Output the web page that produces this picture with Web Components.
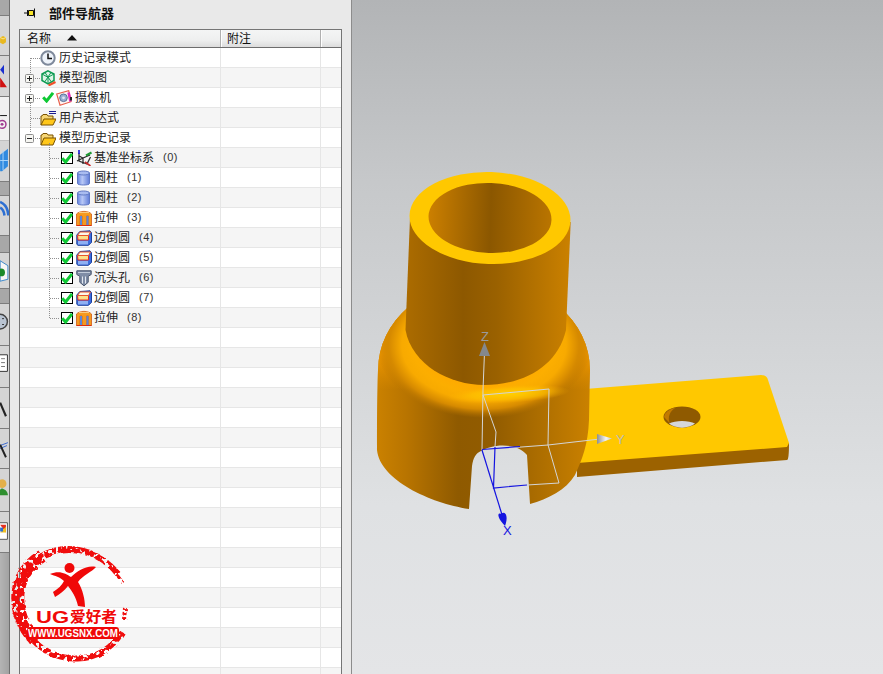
<!doctype html>
<html lang="zh">
<head>
<meta charset="utf-8">
<title>部件导航器</title>
<style>
  html, body { margin: 0; height: 100%; overflow: hidden; background: #e9e9e9; }
</style>
</head>
<body>
<nx-app>
  <nx-toolbar slot="toolbar"></nx-toolbar>
  <nx-part-navigator slot="panel" id="nav">
    <nx-tree-row icon="clock">历史记录模式</nx-tree-row>
    <nx-tree-row icon="view" expander="plus">模型视图</nx-tree-row>
    <nx-tree-row icon="camera" expander="plus" tick>摄像机</nx-tree-row>
    <nx-tree-row icon="exprfolder">用户表达式</nx-tree-row>
    <nx-tree-row icon="folder" expander="minus">模型历史记录</nx-tree-row>
    <nx-tree-row child icon="datum" count="(0)">基准坐标系</nx-tree-row>
    <nx-tree-row child icon="cylinder" count="(1)">圆柱</nx-tree-row>
    <nx-tree-row child icon="cylinder" count="(2)">圆柱</nx-tree-row>
    <nx-tree-row child icon="extrude" count="(3)">拉伸</nx-tree-row>
    <nx-tree-row child icon="blend" count="(4)">边倒圆</nx-tree-row>
    <nx-tree-row child icon="blend" count="(5)">边倒圆</nx-tree-row>
    <nx-tree-row child icon="hole" count="(6)">沉头孔</nx-tree-row>
    <nx-tree-row child icon="blend" count="(7)">边倒圆</nx-tree-row>
    <nx-tree-row child icon="extrude" count="(8)">拉伸</nx-tree-row>
  </nx-part-navigator>
  <nx-viewport slot="view"></nx-viewport>
  <ug-logo slot="overlay"></ug-logo>
</nx-app>

<script>
const ICONS = {
  clock: `<circle cx="8" cy="8" r="6.7" fill="#eef3fa" stroke="#7f8a9c" stroke-width="2"/><path d="M8 3.500v5h4" fill="none" stroke="#111" stroke-width="1.500"/>`,
  view: `<path d="M8 .8l6 3.200v6.500l-6 3.300-6-3.300V4z" fill="#dff5e8" stroke="#0d9a52" stroke-width="1.500"/><path d="M2 4l6 3.300L14 4M8 7.300v6.500M5 2.500l6 9M11 2.500l-6 9" fill="none" stroke="#0d9a52"/><path d="M8.500 15.500l7-3.500" stroke="#f0502a" stroke-width="2.200"/>`,
  camera: `<path d="M.7 4l12-3.300 2.300 11-11 3.500z" fill="#fff3f2" stroke="#e8604c" stroke-width="1.200"/><circle cx="7.500" cy="7.800" r="3.800" fill="#98aed0" stroke="#5a7399"/><circle cx="7.500" cy="7.800" r="1.400" fill="#dfe7f4"/><path d="M12.600 2.500l1.900 9" stroke="#e22cc0" stroke-width="2.600"/><path d="M14 7h2v3.500h-2z" fill="#222"/>`,
  folder: `<path d="M1 15V5h1l1-1.500h4L8 5h5v3" fill="#f6d675" stroke="#7a5200"/><path d="M1 15l3-7h12l-3 7z" fill="#ffc71a" stroke="#7a5200"/>`,
  exprfolder: `<path d="M1 15V6h1l1-1.500h4L8 6h5v3" fill="#f6d675" stroke="#7a5200"/><path d="M1 15l3-6h12l-3 6z" fill="#ffc71a" stroke="#7a5200"/><path d="M9 1.500h7M9 3.500h7" stroke="#1b1b8f"/>`,
  datum: `<path d="M3 3v8l8 3 3.500-7" fill="none" stroke="#333" stroke-width="1.300"/><path d="M3 6l4 2v6M1 11l6-3 7-3" fill="none" stroke="#222" stroke-width="1.200"/><path d="M3 0v4" stroke="#1616d8" stroke-width="1.600"/><path d="M10 5.500l5.500-3" stroke="#1f9a33" stroke-width="2"/><path d="M9 12l5.500 4" stroke="#c82a2a" stroke-width="1.600"/>`,
  cylinder: `<path d="M1.500 3v10.500c0 2 12 2 12 0V3z" fill="url(#cy)" stroke="#5f78c4"/><ellipse cx="7.500" cy="3" rx="6" ry="2" fill="#a9bcf0" stroke="#5f78c4"/><defs><linearGradient id="cy"><stop offset="0" stop-color="#6382e0"/><stop offset=".4" stop-color="#b9c9f6"/><stop offset="1" stop-color="#5f7cd8"/></linearGradient></defs>`,
  extrude: `<path d="M.5 4c3-3.500 12-3.500 15 0v11.500h-3V6h-2v9.500H6V6H4v9.500H.5z" fill="#f59a20" stroke="#d05a10" stroke-width=".8"/><path d="M4 6h2v9H4zM10.500 6h2v9h-2z" fill="#5c86d8"/><path d="M3 2.500h10" stroke="#f8cc80"/><path d="M.5 15.500h15" stroke="#dc2c10"/>`,
  blend: `<path d="M.8 5l3-3.500L14 .8l1.500 2v9.500l-3 3H2l-1.200-1z" fill="#3b6ce0" stroke="#1d3f9a"/><path d="M1.500 5.500h11v4.500H2z" fill="#fbe08a" stroke="#e62c24"/><path d="M4 2h10.500L12.500 5.500H1.500z" fill="#fbf7ea" stroke="#e8562a"/><path d="M2 11h10v3.500H2z" fill="#8fb0f2"/>`,
  hole: `<path d="M.8.800h14.400v3.700l-3 1.800v6l-4.200 3.500-4.200-3.500v-6L.8 4.500z" fill="#7f8da6" stroke="#46536b"/><path d="M6.500 6.500v7M9.500 6.500v7" stroke="#e2e8f0"/><path d="M2 2.500h12" stroke="#c2ccda"/>`
};

class NxApp extends HTMLElement {
  constructor() {
    super();
    this.attachShadow({ mode: "open" });
    this.shadowRoot.innerHTML = /* html */ `
      <style>
        :host { display: flex; position: relative; width: 883px; height: 674px; overflow: hidden; }
        ::slotted(ug-logo) { position: absolute; left: 11px; top: 544px; }
      </style>
      <slot name="toolbar"></slot>
      <slot name="panel"></slot>
      <slot name="view"></slot>
      <slot name="overlay"></slot>
    `;
  }
}

// cut-off strip of the left icon bar: only the first 9px of each button is visible
class NxToolbar extends HTMLElement {
  constructor() {
    super();
    this.attachShadow({ mode: "open" });
  }

  connectedCallback() {
    const parts = [
      [16, "g", ""],
      [40, "", `<path d="M0 22l3-1.500 3 1.500v5l-3 2-3-1.500z" fill="#e8b820"/><path d="M0 22l3 1.500 3-1.500" fill="none" stroke="#fbe68c"/>`],
      [41, "", `<path d="M4 9v10L0 14z" fill="#1a2fd0"/><path d="M0 22l7 10H0z" fill="#d01010"/>`],
      [44, "w", `<path d="M0 19h7" stroke="#111"/><circle cx="2" cy="28" r="4" fill="none" stroke="#a03a90" stroke-width="1.500"/><circle cx="2" cy="28" r="1.500" fill="#a03a90"/>`],
      [41, "", `<path d="M0 14l8-6v18l-6 5H0z" fill="#2f8ae0"/><path d="M0 20h8M3 10v20" stroke="#a8d4fa"/>`],
      [14, "g", ""],
      [40, "", `<path d="M0 6c5 2 8 7 8.500 14M0 12c2 1 4 4 4.500 8" fill="none" stroke="#2d6fd2" stroke-width="2.600"/>`],
      [17, "g", ""],
      [36, "", `<path d="M0 8l8 5v14l-8 2z" fill="#f6f6f6" stroke="#3b86c8"/><circle cx="1" cy="20" r="4" fill="#1a8a2a"/>`],
      [15, "g", ""],
      [42, "", `<circle cx="0" cy="18" r="7.500" fill="#b9c4d2" stroke="#444" stroke-width="1.500"/><path d="M2 15h2M2 21h2" stroke="#333"/>`],
      [42, "", `<path d="M-1 9h8.500v17H-1z" fill="#fff" stroke="#333"/><path d="M1 13h4M1 17h4M1 21h4" stroke="#777"/>`],
      [41, "", `<path d="M0 15l6 14" stroke="#222" stroke-width="2.200"/>`],
      [40, "", `<path d="M0 17l8-3M0 20l7-3" stroke="#3b68d0"/><path d="M0 16l6 13" stroke="#222" stroke-width="2"/>`],
      [43, "", `<circle cx="2" cy="15" r="4.500" fill="#e4b04a"/><path d="M-2 27c0-5 3-7 4-7s6 2 6 7z" fill="#2f8f2f"/>`],
      [41, "", `<path d="M-1 11h8.500v17H-1z" fill="#fff" stroke="#555"/><path d="M0 13h6v8z" fill="#e43020"/><path d="M0 21l6-6v6z" fill="#f0c020"/><path d="M0 16h3v4H0z" fill="#3070d0"/>`]
    ];
    this.shadowRoot.innerHTML = /* html */ `
      <style>
        :host { display: flex; flex-direction: column; flex: none; box-sizing: border-box; width: 10px; height: 674px; border-right: 1px solid #6f6f6f; background: linear-gradient(90deg, #b4b4b4, #a2a2a2); overflow: hidden; }
        .seg { flex: none; box-sizing: border-box; background: #d5d5d5; border-bottom: 1px solid #7d7d7d; overflow: hidden; }
        .g { background: #a8a8a8; }
        .w { background: #f0f0f0; border-bottom-color: #c0c0c0; }
        svg { display: block; width: 9px; height: 100%; }
      </style>
      ${parts.map(([h, cls, art]) => `<div class="seg ${cls}" style="height:${h}px"><svg viewBox="0 0 9 ${h}">${art}</svg></div>`).join("")}
    `;
  }
}

class NxTreeRow extends HTMLElement {
  constructor() {
    super();
    this.attachShadow({ mode: "open" });
  }

  connectedCallback() {
    const icon = this.getAttribute("icon");
    const expander = this.getAttribute("expander");
    const count = this.getAttribute("count");
    const child = this.hasAttribute("child");
    const tick = `<svg class="tick" viewBox="0 0 12 12" width="12" height="12"><path d="M1.200 6.200L4.600 10 11 1.800" fill="none" stroke="#0ec834" stroke-width="3"/></svg>`;

    let lead = "";
    if (child) {
      lead = `<span class="box">${tick}</span>`;
    } else {
      lead = `<span class="exp">${expander ? `<svg viewBox="0 0 9 9" width="9" height="9"><rect x=".5" y=".5" width="8" height="8" rx="1" fill="#f6f6f2" stroke="#8d8d8d"/><path d="M2 4.500h5${expander === "plus" ? "M4.500 2v5" : ""}" stroke="#222"/></svg>` : ""}</span>`;
    }

    this.shadowRoot.innerHTML = /* html */ `
      <style>
        :host { display: grid; grid-template-columns: 200px 1px 99px 1px 20px; height: 20px; box-sizing: border-box; border-bottom: 1px solid #e6e6e6; font: 12px/18px "Noto Sans CJK SC", sans-serif; color: #222; }
        .name { display: flex; align-items: center; min-width: 0; height: 18px; padding-left: ${child ? 41 : 5}px; white-space: nowrap; }
        .line { background: #e6e6e6; }
        .exp { flex: none; width: 9px; height: 9px; margin: 2px 6px 0 0; }
        .exp svg, .ic { display: block; flex: none; }
        .box { flex: none; box-sizing: border-box; width: 12px; height: 12px; margin: 2px 3px 0 0; border: 1px solid #000; background: #fff; }
        .box .tick { display: block; margin: -1px; }
        .topTick { flex: none; margin: 2px 2px 0 2px; }
        .ic { margin-top: 1px; }
        .label { margin: 0 0 1px ${child ? 2 : 3}px; }
        .count { margin-left: 9px; font: 11px "Liberation Sans", sans-serif; letter-spacing: .5px; color: #333; }
      </style>
      <div class="name">
        ${lead}
        ${this.hasAttribute("tick") ? `<span class="topTick">${tick}</span>` : ""}
        ${icon ? `<svg class="ic" viewBox="0 0 16 16" width="16" height="16">${ICONS[icon]}</svg>` : ""}
        ${icon || child ? `<span class="label"><slot></slot></span>` : ""}
        ${count ? `<span class="count">${count}</span>` : ""}
      </div>
      <div class="line"></div><div></div><div class="line"></div><div></div>
    `;
  }
}

class NxPartNavigator extends HTMLElement {
  constructor() {
    super();
    this.attachShadow({ mode: "open" });
  }

  connectedCallback() {
    // dotted tree connectors, coordinates relative to the tree body
    let dots = "M10.500 10v15M10.500 35v10M10.500 55v30M29.500 95v175";
    [10, 70].forEach((y) => (dots += `M11 ${y}.5h9`));
    [30, 50, 90].forEach((y) => (dots += `M15 ${y}.5h5`));
    for (let y = 110; y <= 270; y += 20) dots += `M30 ${y}.5h10`;

    this.shadowRoot.innerHTML = /* html */ `
      <style>
        :host { display: block; flex: none; box-sizing: border-box; width: 342px; height: 674px; padding: 0 9px; background: #e9e9e9; border-right: 1px solid #8c8c8c; overflow: hidden; }
        .title { display: flex; align-items: center; box-sizing: border-box; height: 29px; padding: 0 0 4px 5px; font: bold 13px "Noto Sans CJK SC", sans-serif; color: #111; }
        .title svg { margin-right: 13px; }
        .table { box-sizing: border-box; width: 323px; border: 1px solid #757575; border-bottom: 0; background: #fff; }
        .head { display: grid; grid-template-columns: 200px 2px 98px 2px 19px; height: 17px; border-bottom: 1px solid #6d6d6d; background: linear-gradient(#f4f5f5, #eeefef 60%, #dcdcdc); font: 12px/15px "Noto Sans CJK SC", sans-serif; color: #111; }
        .cell { display: flex; align-items: center; padding: 0 0 2px 7px; }
        .cell svg { margin: 1px 0 0 16px; }
        .sep { background: linear-gradient(90deg, #b0b0b0 50%, #fff 50%); }
        .body { position: relative; height: 628px; overflow: hidden; }
        ::slotted(nx-tree-row:nth-of-type(even)) { background: #f5f5f5; }
        .dots { position: absolute; left: 0; top: 0; pointer-events: none; }
      </style>
      <div class="title">
        <svg viewBox="0 0 12 12" width="12" height="12"><path d="M0 6h3M3.500 3v6" stroke="#111" fill="none"/><path d="M4.500 3.500h5v5h-5z" fill="#f8e428" stroke="#111"/><path d="M10.500 1.500v9" stroke="#111"/></svg>
        <span>部件导航器</span>
      </div>
      <div class="table">
        <div class="head">
          <div class="cell">名称<svg viewBox="0 0 10 6" width="10" height="6"><path d="M5 0l5 5.500H0z" fill="#111"/></svg></div>
          <div class="sep"></div>
          <div class="cell" style="padding-left:5px">附注</div>
          <div class="sep"></div>
          <div></div>
        </div>
        <div class="body">
          <slot></slot>
          <svg class="dots" width="200" height="300"><path d="${dots}" fill="none" stroke="#8f8f8f" stroke-dasharray="1 1"/></svg>
        </div>
      </div>
    `;
  }
}

class NxViewport extends HTMLElement {
  constructor() {
    super();
    this.attachShadow({ mode: "open" });
    const body = "M378 370A106 90 0 0 1 590 370L589 420C588 445 582 460 575 475C566 490 548 499 530 504L527 455C515 441 490 445 481 451C476 453 473 458 472 466L469 509C430 503 380 480 377 450C377 420 377 395 378 370Z";
    this.shadowRoot.innerHTML = /* html */ `
      <style>
        :host { display: block; flex: 1; height: 674px; background: linear-gradient(#b2b4b6, #c6c8ca 27%, #dfe1e3 75%, #e4e5e7); }
        svg { display: block; }
        text { font: 13px "Liberation Sans", sans-serif; }
      </style>
      <svg viewBox="352 0 531 674" width="531" height="674">
        <defs>
          <clipPath id="bodyClip"><path d="${body}"/></clipPath>
          <linearGradient id="wall" gradientUnits="userSpaceOnUse" x1="377" x2="590" y1="0" y2="0">
            <stop offset="0" stop-color="#ca8100"/><stop offset=".14" stop-color="#b87400"/>
            <stop offset=".38" stop-color="#8f5a00"/><stop offset=".55" stop-color="#925c00"/>
            <stop offset="1" stop-color="#ca8100"/>
          </linearGradient>
          <linearGradient id="stem" gradientUnits="userSpaceOnUse" x1="405" x2="571" y1="0" y2="0">
            <stop offset="0" stop-color="#ac6c00"/><stop offset=".35" stop-color="#8d5800"/>
            <stop offset=".55" stop-color="#9a6100"/><stop offset="1" stop-color="#cb8100"/>
          </linearGradient>
          <linearGradient id="bore" gradientUnits="userSpaceOnUse" x1="429" x2="552" y1="0" y2="0">
            <stop offset="0" stop-color="#cb7f00"/><stop offset=".5" stop-color="#8b5700"/>
            <stop offset="1" stop-color="#ba7500"/>
          </linearGradient>
          <linearGradient id="shoulder" gradientUnits="userSpaceOnUse" x1="0" x2="0" y1="300" y2="390">
            <stop offset="0" stop-color="#f59c00"/><stop offset=".6" stop-color="#f09800"/>
            <stop offset="1" stop-color="#e08e00" stop-opacity="0"/>
          </linearGradient>
          <radialGradient id="fillet" gradientUnits="userSpaceOnUse" cx="0" cy="0" r="1" gradientTransform="translate(484 345) scale(108 73)">
            <stop offset=".5" stop-color="#ffa800"/><stop offset=".66" stop-color="#fcae00"/>
            <stop offset=".76" stop-color="#f8aa00"/><stop offset=".88" stop-color="#d68a00"/>
            <stop offset="1" stop-color="#b87400" stop-opacity="0"/>
          </radialGradient>
          <radialGradient id="spec">
            <stop offset="0" stop-color="#ffd000"/><stop offset=".6" stop-color="#ffc400" stop-opacity=".6"/>
            <stop offset="1" stop-color="#ffb000" stop-opacity="0"/>
          </radialGradient>
          <linearGradient id="tip"><stop offset="0" stop-color="#8d8f91"/><stop offset=".6" stop-color="#f5f5f5"/><stop offset="1" stop-color="#c5c7c9"/></linearGradient>
        </defs>

        <!-- plate -->
        <path d="M577 477L787 460Q789 460 789 443L577 460Z" fill="#9c6200"/>
        <path d="M585 389L761 375Q767 375 768 380L789 443 787 447 577 463Z" fill="#ffc800"/>
        <ellipse cx="682" cy="417" rx="18.500" ry="10.500" fill="#8f5a00"/>
        <path d="M664 417a18.500 10.500 0 0 1 12-9.500c-6 3-9 10-6 16z" fill="#c27a00"/>
        <path d="M669 423.500c6-3.500 20-3.500 26 0-6 5.500-20 5.500-26 0z" fill="#d6d7d9"/>

        <!-- lower body with the slot -->
        <path d="${body}" fill="url(#wall)"/>
        <g clip-path="url(#bodyClip)">
          <rect x="370" y="270" width="230" height="120" fill="url(#shoulder)"/>
          <ellipse cx="484" cy="345" rx="108" ry="73" fill="url(#fillet)"/>
          <ellipse cx="508" cy="394" rx="62" ry="9" transform="rotate(-3 508 394)" fill="url(#spec)"/>
        </g>

        <!-- stem -->
        <path d="M410 218L405.500 330C412 365 450 385 484 385C525 385 558 365 566 330L570.700 222Z" fill="url(#stem)"/>
        <ellipse cx="490" cy="218" rx="80.500" ry="46" transform="rotate(2 490 218)" fill="#ffc800"/>
        <ellipse cx="490" cy="218" rx="61.500" ry="35" transform="rotate(2 490 218)" fill="url(#bore)"/>

        <!-- datum csys -->
        <g fill="none" stroke="#d4d5d6" stroke-width="1">
          <path d="M484.500 352L483 390 482 450"/>
          <path d="M483 395L549 389 548 445 559 483 527 485"/>
          <path d="M483 395L496 432 495 447"/>
          <path d="M482 450L548 445 600 439"/>
        </g>
        <g fill="none" stroke="#1414e0" stroke-width="1.200">
          <path d="M482 450L503 518"/>
          <path d="M482 449.500L520 446.500"/>
          <path d="M495 447L493.500 488 527 485"/>
        </g>
        <path d="M484.500 342L490 356H479Z" fill="#84888c"/>
        <path d="M612 438.500L597 434V444Z" fill="url(#tip)"/>
        <path d="M505 526C497 518 497 512 501 514 505 510 509 516 505 526Z" fill="#1414e0"/>
        <text x="481" y="341" fill="#9a9b9c">Z</text>
        <text x="616" y="444" fill="#b9babb">Y</text>
        <text x="503" y="535" fill="#1414e0">X</text>
      </svg>
    `;
  }
}

class UgLogo extends HTMLElement {
  constructor() {
    super();
    this.attachShadow({ mode: "open" });
    this.shadowRoot.innerHTML = /* html */ `
      <style>
        :host { display: block; width: 120px; height: 124px; }
        svg { display: block; }
        .ug { font: bold 16px "Liberation Sans", sans-serif; }
        .cn { font: bold 15px "Noto Sans CJK SC", sans-serif; }
        .url { font: bold 10.500px "Liberation Sans", sans-serif; }
      </style>
      <svg viewBox="11 544 120 124" width="120" height="124">
        <defs>
          <filter id="rough" x="-10%" y="-10%" width="120%" height="120%">
            <feTurbulence type="fractalNoise" baseFrequency=".22" numOctaves="2" seed="4" result="n"/>
            <feDisplacementMap in="SourceGraphic" in2="n" scale="5" result="d"/>
            <feColorMatrix in="n" type="matrix" values="0 0 0 0 0  0 0 0 0 0  0 0 0 0 0  0 0 0 -14 9" result="holes"/>
            <feComposite in="d" in2="holes" operator="in"/>
          </filter>
        </defs>
        <g fill="none" stroke="#f00808" filter="url(#rough)">
          <path d="M35 640C10 612 12 575 42 556" stroke-width="13"/>
          <path d="M38 558C62 543 95 546 118 574" stroke-width="6"/>
          <path d="M70 549C90 550 108 560 122 582" stroke-width="3" stroke-dasharray="9 2"/>
          <path d="M33 640C55 664 100 668 122 632" stroke-width="6"/>
          <path d="M124 620L125 608" stroke-width="4" stroke-dasharray="3 2"/>
        </g>
        <g fill="#f00808">
          <circle cx="69.500" cy="568" r="5"/>
          <path d="M50 574C60 570 66 574 71 577 78 571 86 565 96 567 92 572 83 575 78 582 83 590 85 600 85 607L78 606C76 597 72 591 68 586 64 591 60 594 55 597L53 592C58 589 62 585 64 581 60 577 55 576 50 574Z"/>
        </g>
        <text class="ug" x="36" y="623" fill="#f00808" textLength="33" lengthAdjust="spacingAndGlyphs">UG</text>
        <text class="cn" x="70" y="622" fill="#f00808" textLength="47" lengthAdjust="spacingAndGlyphs">爱好者</text>
        <rect x="27" y="627" width="92" height="12" rx="3" fill="#f00808"/>
        <text class="url" x="28" y="637" fill="#fff" textLength="90" lengthAdjust="spacingAndGlyphs">WWW.UGSNX.COM</text>
      </svg>
    `;
  }
}

customElements.define("nx-app", NxApp);
customElements.define("nx-toolbar", NxToolbar);
customElements.define("nx-tree-row", NxTreeRow);
customElements.define("nx-part-navigator", NxPartNavigator);
customElements.define("nx-viewport", NxViewport);
customElements.define("ug-logo", UgLogo);

// blank rows fill the tree down to the bottom of the window
const nav = document.getElementById("nav");
for (let i = 0; i < 18; i++) nav.appendChild(document.createElement("nx-tree-row"));
</script>
</body>
</html>
